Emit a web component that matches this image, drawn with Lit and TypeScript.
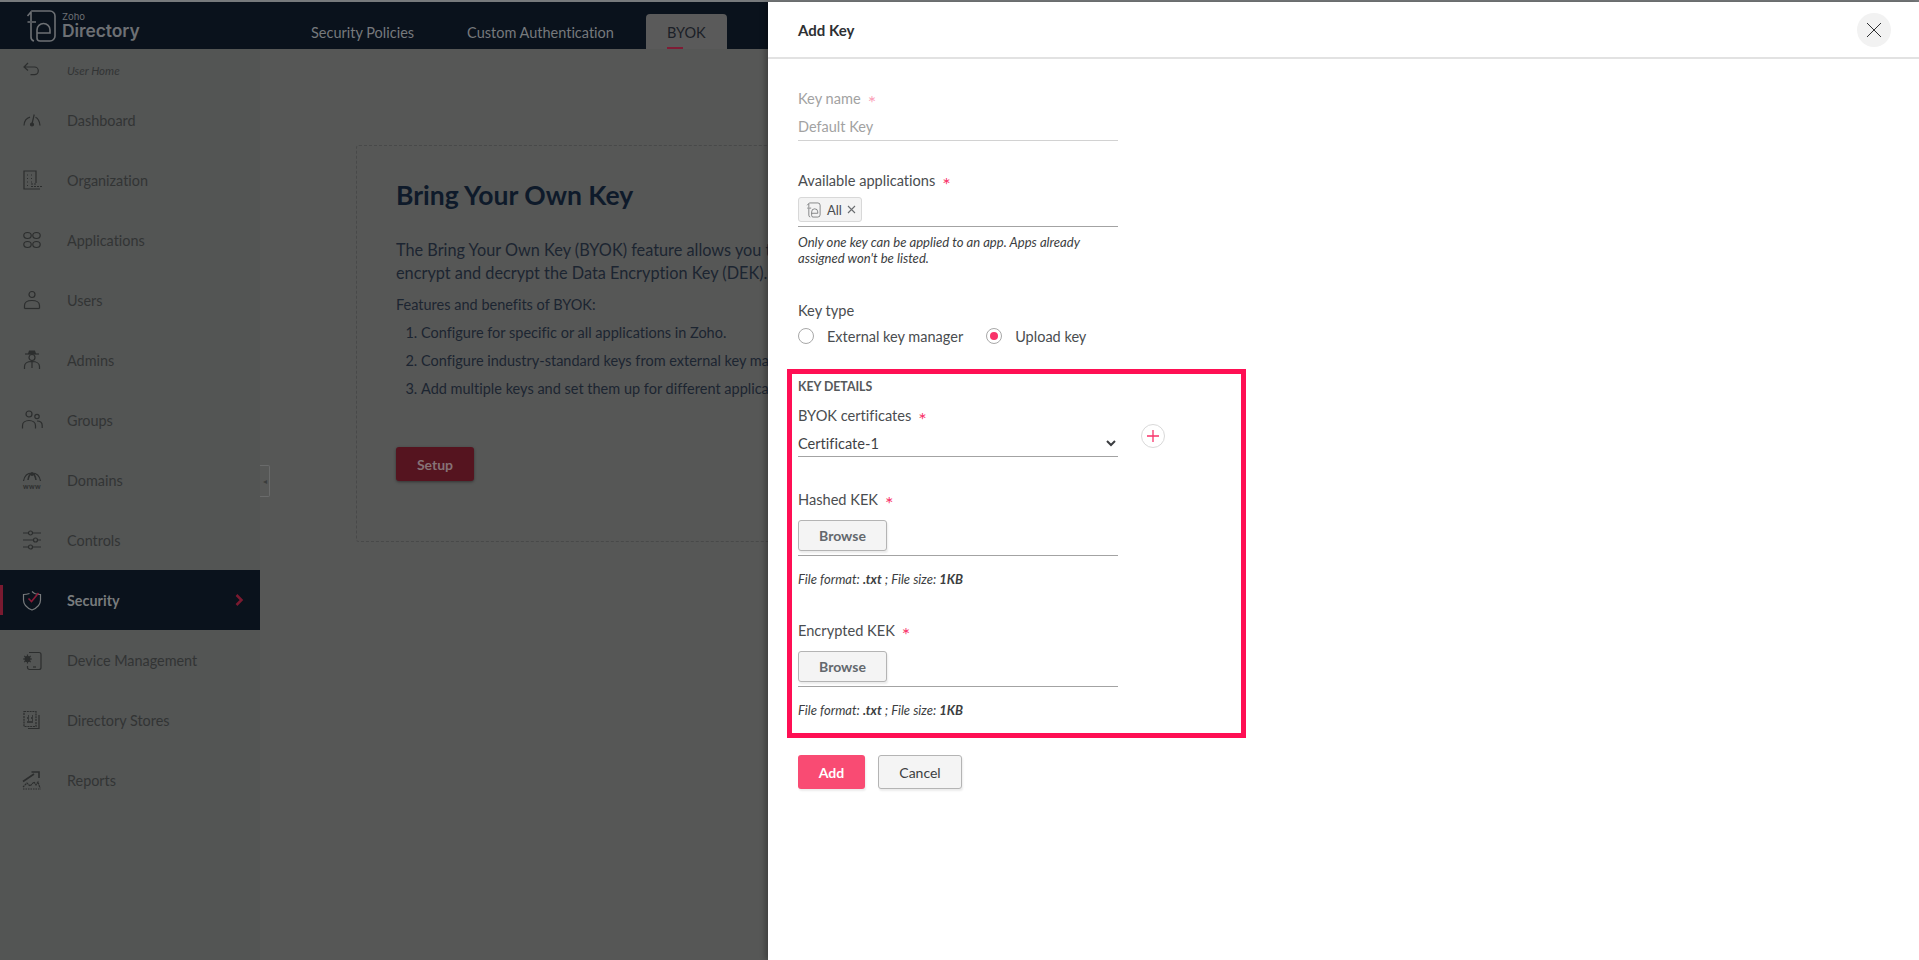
import { LitElement, html, css, svg } from 'lit';
import { customElement } from 'lit/decorators.js';

const navIcons: Record<string, unknown> = {
  back: svg`<path d="M7 4 3 8l4 3.500M3 8h10.500a3.800 3.800 0 0 1 0 7.600H9.500"/>`,
  dashboard: svg`<path d="M3 16.500C3.300 12 6 9 9 8.200M14.500 8.300C17 9.500 18.600 12.500 19 16.500"/><path d="M11 15 13.200 5.500"/><circle cx="11" cy="15.500" r="1.500" fill="currentColor"/>`,
  organization: svg`<path d="M19 20H3V2h12v12"/><path d="M6 6h1M10 6h1M6 9.500h1M10 9.500h1M6 13h1M10 13h1M6 16.500h1"/><path d="M10 15h5M10 17.500h11" stroke-dasharray="2 1"/>`,
  applications: svg`<ellipse cx="6.500" cy="6.500" rx="3.700" ry="3"/><ellipse cx="15.500" cy="6.500" rx="3.700" ry="3"/><ellipse cx="6.500" cy="15.500" rx="3.700" ry="3"/><ellipse cx="15.500" cy="15.500" rx="3.700" ry="3"/>`,
  users: svg`<circle cx="11" cy="5.500" r="3"/><path d="M3.500 19.500v-3C3.500 13 7 11.500 11 11.500s7.500 1.500 7.500 5v3"/><path d="M3.500 19.500h15"/>`,
  admins: svg`<path d="M4 5h14"/><path d="M7.500 5l1-3h5l1 3" fill="currentColor"/><circle cx="11" cy="8.500" r="3"/><path d="M3.500 20v-2.500c0-3 3-5 7.500-5s7.500 2 7.500 5V20M11 13v6"/>`,
  groups: svg`<circle cx="8" cy="5" r="3"/><path d="M1.500 19.500v-2.800c0-3 2.700-5.200 6.500-5.200s6.500 2.200 6.500 5.200v2.800"/><circle cx="16" cy="7.500" r="2.200"/><path d="M16 12c3 0 5.200 1.800 5.200 4.500v2.500"/>`,
  domains: svg`<path d="M2.500 12C3.500 6.500 7 4 11 4s7.500 2.500 8.500 8"/><path d="M7 11c.5-3.500 2-6 4-7 2 1 3.500 3.500 4 7M9 5.500h5M11 4v3" stroke-width="1.500"/><text x="11" y="19.500" text-anchor="middle" font-size="7" font-family="Lato" font-weight="700" letter-spacing=".4" fill="currentColor" stroke="none">www</text>`,
  controls: svg`<path d="M2 4h5.500M11.500 4H20M2 11h10.500M16.500 11H20M2 18h5.500M11.500 18H20"/><circle cx="9.500" cy="4" r="2"/><circle cx="14.500" cy="11" r="2"/><circle cx="9.500" cy="18" r="2"/>`,
  device: svg`<path d="M8 3.500h10a2 2 0 0 1 2 2v13a2 2 0 0 1-2 2H8.500a2 2 0 0 1-2-2V17"/><path d="M12 18h3"/><circle cx="6.500" cy="10" r="2.500" fill="currentColor"/><path d="M6.500 5.500v9M2 10h9M3.300 6.800l6.400 6.400M9.700 6.800l-6.400 6.400"/>`,
  stores: svg`<path d="M3 2.500h12v15H3z" stroke-dasharray="2 .8"/><path d="M7 7h1M11 7h1M7 11h1M11 11h1M6 9h2M10 9h2M6 13h6" stroke-width="1.300"/><path d="M18 6v13.500H7"/>`,
  reports: svg`<path d="M2 12.500 13 5M10.500 3H18v6" stroke-width="1.600"/><path d="M2 18l4-4 3 3 4-4 2 3 2-3 2 6" stroke-dasharray="2 .6"/><path d="M2 20h18" stroke-dasharray="1.500 1"/>`,
};

const navItems = [
  { label: 'Dashboard', icon: 'dashboard' },
  { label: 'Organization', icon: 'organization' },
  { label: 'Applications', icon: 'applications' },
  { label: 'Users', icon: 'users' },
  { label: 'Admins', icon: 'admins' },
  { label: 'Groups', icon: 'groups' },
  { label: 'Domains', icon: 'domains' },
  { label: 'Controls', icon: 'controls' },
  { label: 'Security', icon: 'security', active: true },
  { label: 'Device Management', icon: 'device' },
  { label: 'Directory Stores', icon: 'stores' },
  { label: 'Reports', icon: 'reports' },
];

const logoMark = svg`<path d="M6 2H24a5 5 0 0 1 5 5V27a5 5 0 0 1-5 5H14a3 3 0 0 1-3-3V21a6.500 6.500 0 0 1 13 0v3H11"/><path d="M1.500 7 5 3V12M1.500 13H10M5 14V28a4 4 0 0 0 3 4"/>`;

@customElement('app-root')
export class AppRoot extends LitElement {
  static styles = css`
    :host {
      display: block;
      position: relative;
      height: 960px;
      overflow: hidden;
      background: #565756;
      font-family: 'Lato', 'Open Sans', sans-serif;
      font-size: 14px;
      font-variant-ligatures: none;
    }
    .top-rule {
      height: 2px;
      background: #777a7c;
    }
    .topbar {
      height: 47px;
      background: #0a121c;
      display: flex;
      align-items: flex-end;
    }
    .brand {
      width: 260px;
      height: 47px;
      display: flex;
      align-items: center;
      gap: 4px;
      padding: 0 0 0 26px;
      box-sizing: border-box;
      color: #6d7074;
    }
    .brand svg {
      width: 32px;
      height: 34px;
      fill: none;
      stroke: currentColor;
      stroke-width: 1.600;
    }
    .brand-text {
      display: flex;
      flex-direction: column;
      font-family: 'Inter', 'Lato', sans-serif;
      line-height: 1;
    }
    .brand-zoho {
      font-size: 9.500px;
      margin-bottom: 1px;
    }
    .brand-name {
      font-size: 17.500px;
      font-weight: 600;
      letter-spacing: -0.1px;
    }
    .tabs {
      display: flex;
      align-items: flex-end;
      padding-left: 30px;
      gap: 11px;
      height: 47px;
    }
    .tab {
      height: 35px;
      padding: 0 21px;
      font-size: 14.500px;
      line-height: 37px;
      color: #76797c;
      position: relative;
      white-space: nowrap;
      box-sizing: border-box;
    }
    .tab.active {
      background: #5a5a5a;
      color: #1b2027;
      border-radius: 4px 4px 0 0;
    }
    .tab.active::after {
      content: '';
      position: absolute;
      left: 21px;
      bottom: 0;
      width: 16px;
      height: 2px;
      background: #7f1c35;
    }
    .body {
      display: flex;
      height: 911px;
    }
    .sidebar {
      width: 260px;
      flex: none;
      background: #535554;
      padding-top: 1px;
      position: relative;
    }
    .nav-home,
    .nav-item {
      display: flex;
      align-items: center;
      padding-left: 21px;
      color: #323434;
    }
    .nav-home {
      height: 40px;
      font-size: 11.500px;
      font-style: italic;
    }
    .nav-item {
      height: 60px;
      font-size: 14.400px;
      position: relative;
    }
    .nav-item.active {
      background: #0a121c;
      color: #787b7d;
      font-weight: 700;
    }
    .nav-item.active::before {
      content: '';
      position: absolute;
      left: 0;
      top: 15px;
      width: 3px;
      height: 30px;
      background: #7a1a30;
    }
    .nav-icon {
      width: 22px;
      height: 22px;
      margin-right: 24px;
      flex: none;
      fill: none;
      stroke: currentColor;
      stroke-width: 1.200;
      color: #2c2e2e;
    }
    .nav-item.active .nav-icon {
      color: #777a7c;
    }
    .check {
      stroke: #8a1c38;
      stroke-width: 1.600;
    }
    .chevron {
      position: absolute;
      right: 16px;
      top: 24px;
      width: 9px;
      height: 12px;
      fill: none;
      stroke: #7a1a30;
      stroke-width: 2.500;
    }
    .collapse {
      position: absolute;
      left: 260px;
      top: 416px;
      width: 9px;
      height: 30px;
      border: 1px solid #6a6b6b;
      border-left: none;
      background: #575857;
      display: flex;
      align-items: center;
      justify-content: center;
      color: #3a3c3c;
      font-size: 8px;
      border-radius: 0 2px 2px 0;
    }
    .main {
      flex: 1;
      padding: 96px 0 0 96px;
    }
    .card {
      width: 1400px;
      height: 397px;
      box-sizing: border-box;
      border: 1px dashed #484949;
      border-radius: 3px;
      padding: 31px 39px;
      color: #1c2531;
    }
    .card h1 {
      margin: 0 0 25px;
      font-size: 26.500px;
      line-height: 36px;
      font-weight: 700;
      color: #0e1a2a;
    }
    .card p {
      margin: 0;
      font-size: 16.300px;
      line-height: 23px;
      white-space: nowrap;
    }
    .card .features {
      font-size: 14.500px;
      line-height: 20px;
      margin-top: 11px;
    }
    .card ol {
      margin: 4px 0 0;
      padding: 0 0 0 25px;
      font-size: 14.500px;
      line-height: 28px;
      white-space: nowrap;
    }
    .setup {
      margin-top: 44px;
      width: 78px;
      height: 34px;
      border: none;
      border-radius: 3px;
      background: #55141f;
      color: #867276;
      font: 700 14px 'Lato', sans-serif;
      box-shadow: 0 1px 3px rgba(0, 0, 0, 0.4);
    }
    .panel {
      position: absolute;
      left: 768px;
      right: 0;
      top: 2px;
      bottom: 0;
      background: #fff;
      color: #4a4d50;
      box-shadow: -3px 0 5px rgba(0, 0, 0, 0.25);
    }
    .panel-head {
      height: 55px;
      border-bottom: 2px solid #e2e2e2;
      display: flex;
      align-items: center;
      justify-content: space-between;
      padding: 0 28px 0 30px;
    }
    .panel-title {
      font-size: 15px;
      font-weight: 700;
      color: #2e3033;
    }
    .close {
      width: 34px;
      height: 34px;
      border-radius: 50%;
      background: #f2f2f2;
      display: flex;
      align-items: center;
      justify-content: center;
    }
    .close svg {
      width: 16px;
      height: 16px;
      stroke: #2f3133;
      stroke-width: 1;
    }
    .form {
      padding: 30px 30px 0;
      display: flex;
      flex-direction: column;
    }
    .label {
      font-size: 14.600px;
      line-height: 20px;
      display: flex;
      gap: 7px;
    }
    .req {
      color: #f8336a;
      font-size: 20px;
      line-height: 26px;
      height: 20px;
    }
    .line {
      width: 320px;
      box-sizing: border-box;
      border-bottom: 1px solid #a3a3a3;
    }
    .muted .label {
      color: #a2a2a2;
    }
    .muted .req {
      color: #fba0b8;
    }
    .muted .line {
      border-bottom-color: #d2d2d2;
      color: #a2a2a2;
      font-size: 14.500px;
      height: 32px;
      padding-top: 8px;
      line-height: 20px;
    }
    .apps {
      margin-top: 30px;
    }
    .chips {
      height: 30px;
      margin-top: 6px;
    }
    .chip {
      width: 64px;
      height: 25px;
      box-sizing: border-box;
      border: 1px solid #d8d8d8;
      border-radius: 3px;
      background: #f3f3f3;
      display: flex;
      align-items: center;
      padding-left: 7px;
      gap: 5px;
      font-size: 13px;
      color: #4a4d50;
    }
    .chip svg {
      width: 16px;
      height: 16px;
      fill: none;
      stroke: #5b5e60;
      stroke-width: 1.500;
      flex: none;
    }
    .chip svg.x {
      width: 9px;
      height: 9px;
      stroke-width: 1.100;
      stroke: #6a6d70;
    }
    .hint {
      margin: 7px 0 0;
      font-size: 13.100px;
      line-height: 16px;
      font-style: italic;
      color: #3c3e41;
      width: 320px;
    }
    .key-type {
      margin-top: 35px;
    }
    .radios {
      display: flex;
      align-items: center;
      margin-top: 5px;
      height: 20px;
    }
    .radio {
      width: 16px;
      height: 16px;
      border-radius: 50%;
      box-sizing: border-box;
      border: 1px solid #a8a8a8;
      margin-right: 13px;
      display: flex;
      align-items: center;
      justify-content: center;
      flex: none;
    }
    .radio.on::after {
      content: '';
      width: 8px;
      height: 8px;
      border-radius: 50%;
      background: #f8336a;
    }
    .radio-label {
      font-size: 14.500px;
      margin-right: 23px;
    }
    .details {
      position: relative;
      margin: 23px 0 0 -11px;
      width: 459px;
      height: 369px;
      box-sizing: border-box;
      border: 5px solid #ff0f54;
      padding: 5px 6px 0;
    }
    .details-title {
      font-size: 12.300px;
      line-height: 16px;
      font-weight: 700;
      color: #56595c;
    }
    .cert {
      margin-top: 11px;
    }
    .select {
      height: 31px;
      padding-top: 5px;
      display: flex;
      align-items: center;
      justify-content: space-between;
      font-size: 14.600px;
      color: #3f4245;
    }
    .select svg {
      width: 10px;
      height: 7px;
      fill: none;
      stroke: #3b3d40;
      stroke-width: 2;
      margin-right: 2px;
    }
    .add-cert {
      position: absolute;
      left: 349px;
      top: 50px;
      width: 24px;
      height: 24px;
      box-sizing: border-box;
      border: 1px solid #d9d9d9;
      border-radius: 50%;
      display: flex;
      align-items: center;
      justify-content: center;
    }
    .add-cert svg {
      width: 12px;
      height: 12px;
      stroke: #f8336a;
      stroke-width: 1.300;
    }
    .file {
      margin-top: 33px;
    }
    .file-box {
      height: 36px;
    }
    .browse {
      display: block;
      width: 89px;
      height: 31px;
      padding: 0;
      box-sizing: border-box;
      border: 1px solid #b4b4b4;
      border-radius: 3px;
      background: #f4f4f4;
      color: #63686d;
      font: 700 14px 'Lato', sans-serif;
      box-shadow: 1px 2px 2px rgba(0, 0, 0, 0.08);
    }
    .file-label {
      margin-bottom: 10px;
    }
    .file-note {
      margin: 15px 0 5px;
      font-size: 13px;
      line-height: 17px;
      font-style: italic;
      color: #3c3e41;
    }
    .actions {
      display: flex;
      gap: 13px;
      margin-top: 17px;
    }
    .btn {
      height: 34px;
      padding: 0;
      box-sizing: border-box;
      border-radius: 3px;
      font: 14px 'Lato', sans-serif;
      box-shadow: 1px 2px 2px rgba(0, 0, 0, 0.08);
    }
    .btn.primary {
      width: 67px;
      border: none;
      background: #f94b73;
      color: #fff;
      font-weight: 700;
    }
    .btn.secondary {
      width: 84px;
      border: 1px solid #b4b4b4;
      background: #f4f4f4;
      color: #3c3e41;
    }
  `;

  private navRow(item: { label: string; icon: string; active?: boolean }) {
    const shape =
      item.icon === 'security'
        ? svg`<path d="M11 2.500 13.500 4.500C15.500 5.200 17.500 5.500 19.500 5.500V11C19.500 15.500 16 19 11 21 6 19 2.500 15.500 2.500 11V5.500C4.500 5.500 6.500 5.200 8.500 4.500"/><path class="check" d="M7.500 9.500l3 3 7-8.500"/>`
        : navIcons[item.icon];
    return html`
      <div class="nav-item ${item.active ? 'active' : ''}">
        <svg class="nav-icon" viewBox="0 0 22 22">${shape}</svg>
        ${item.label}
        ${item.active
          ? html`<svg class="chevron" viewBox="0 0 9 12"><path d="M1.500 1 6.500 6l-5 5"/></svg>`
          : ''}
      </div>
    `;
  }

  private fileField(label: string) {
    return html`
      <div class="file">
        <div class="label file-label">${label}<span class="req">*</span></div>
        <div class="line file-box"><button class="browse">Browse</button></div>
        <div class="file-note">File format: <b>.txt</b> ; File size: <b>1KB</b></div>
      </div>
    `;
  }

  render() {
    return html`
      <div class="top-rule"></div>
      <header class="topbar">
        <div class="brand">
          <svg viewBox="0 0 32 34">${logoMark}</svg>
          <div class="brand-text">
            <span class="brand-zoho">Zoho</span>
            <span class="brand-name">Directory</span>
          </div>
        </div>
        <nav class="tabs">
          <div class="tab">Security Policies</div>
          <div class="tab">Custom Authentication</div>
          <div class="tab active">BYOK</div>
        </nav>
      </header>
      <div class="body">
        <aside class="sidebar">
          <div class="nav-home">
            <svg class="nav-icon" viewBox="0 0 22 22">${navIcons.back}</svg>
            User Home
          </div>
          ${navItems.map((item) => this.navRow(item))}
          <div class="collapse">◂</div>
        </aside>
        <main class="main">
          <section class="card">
            <h1>Bring Your Own Key</h1>
            <p>
              The Bring Your Own Key (BYOK) feature allows you to<br />
              encrypt and decrypt the Data Encryption Key (DEK).
            </p>
            <p class="features">Features and benefits of BYOK:</p>
            <ol>
              <li>Configure for specific or all applications in Zoho.</li>
              <li>Configure industry-standard keys from external key managers.</li>
              <li>Add multiple keys and set them up for different applications.</li>
            </ol>
            <button class="setup">Setup</button>
          </section>
        </main>
      </div>

      <aside class="panel">
        <div class="panel-head">
          <span class="panel-title">Add Key</span>
          <div class="close">
            <svg viewBox="0 0 16 16"><path d="M1 1l14 14M15 1 1 15" /></svg>
          </div>
        </div>
        <div class="form">
          <div class="muted">
            <div class="label">Key name<span class="req">*</span></div>
            <div class="line">Default Key</div>
          </div>
          <div class="apps">
            <div class="label">Available applications<span class="req">*</span></div>
            <div class="line chips">
              <div class="chip">
                <svg viewBox="0 0 32 34">${logoMark}</svg>
                All
                <svg class="x" viewBox="0 0 9 9"><path d="M1 1l7 7M8 1 1 8" /></svg>
              </div>
            </div>
            <p class="hint">
              Only one key can be applied to an app. Apps already assigned won't be listed.
            </p>
          </div>
          <div class="key-type">
            <div class="label">Key type</div>
            <div class="radios">
              <span class="radio"></span>
              <span class="radio-label">External key manager</span>
              <span class="radio on"></span>
              <span class="radio-label">Upload key</span>
            </div>
          </div>
          <section class="details">
            <div class="details-title">KEY DETAILS</div>
            <div class="cert">
              <div class="label">BYOK certificates<span class="req">*</span></div>
              <div class="line select">
                Certificate-1
                <svg viewBox="0 0 10 7"><path d="M1 1l4 4 4-4" /></svg>
              </div>
            </div>
            <div class="add-cert">
              <svg viewBox="0 0 12 12"><path d="M6 0v12M0 6h12" /></svg>
            </div>
            ${this.fileField('Hashed KEK')} ${this.fileField('Encrypted KEK')}
          </section>
          <div class="actions">
            <button class="btn primary">Add</button>
            <button class="btn secondary">Cancel</button>
          </div>
        </div>
      </aside>
    `;
  }
}
